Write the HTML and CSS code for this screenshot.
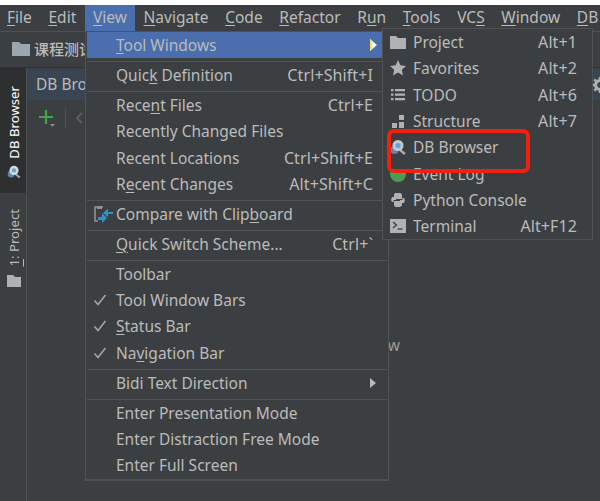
FILE: index.html
```html
<!DOCTYPE html>
<html lang="en">
<head>
<meta charset="utf-8">
<title>View menu</title>
<link rel="stylesheet" href="styles.css">
</head>
<body>
<div class="window">
  <nav class="menubar">
    <span class="mb-item"><u>F</u>ile</span>
    <span class="mb-item"><u>E</u>dit</span>
    <span class="mb-item active"><u>V</u>iew</span>
    <span class="mb-item"><u>N</u>avigate</span>
    <span class="mb-item"><u>C</u>ode</span>
    <span class="mb-item"><u>R</u>efactor</span>
    <span class="mb-item">R<u>u</u>n</span>
    <span class="mb-item"><u>T</u>ools</span>
    <span class="mb-item">VC<u>S</u></span>
    <span class="mb-item"><u>W</u>indow</span>
    <span class="mb-item"><u>D</u>B</span>
  </nav>
  <div class="navbar">
    <svg class="nav-folder" width="18" height="14" viewBox="0 0 18 14"><path d="M0 0h7l2 2h9v12H0z" fill="#9aa7b0"/></svg>
    <span class="crumb">课程测试</span>
  </div>
  <div class="workspace">
    <aside class="sidebar">
      <div class="side-tab current">
        <span class="side-label">DB Browser</span>
        <svg width="16" height="16" viewBox="0 0 16 16"><circle cx="4.500" cy="11" r="4" fill="#5f86b3"/><path d="M10 11l5 4" stroke="#a9a9a9" stroke-width="2.400"/><circle cx="8" cy="6.500" r="5.500" fill="#d5d9dc"/><circle cx="8" cy="6.500" r="2.600" fill="#58a9d8"/></svg>
      </div>
      <div class="side-tab">
        <span class="side-label"><u>1</u>: Project</span>
        <svg width="14" height="12" viewBox="0 0 14 12"><path d="M0 0h6l2 2h6v10H0z" fill="#afb1b3"/></svg>
      </div>
    </aside>
    <main class="content">
      <div class="tabs">
        <span class="tab">DB Browser</span>
        <span class="tab-end">
          <svg width="16" height="16" viewBox="0 0 16 16"><circle cx="8" cy="8" r="4.500" fill="none" stroke="#afb1b3" stroke-width="3"/><path d="M8 0v3M8 13v3M0 8h3M13 8h3M2.300 2.300l2 2M11.700 11.700l2 2M13.700 2.300l-2 2M4.300 11.700l-2 2" stroke="#afb1b3" stroke-width="2.400"/></svg>
        </span>
      </div>
      <div class="toolbar">
        <svg width="18" height="18" viewBox="0 0 18 18"><path d="M8 1v14M1 8h14" stroke="#3fa64a" stroke-width="2.200"/><path d="M12 15h5l-2.500 3z" fill="#8a8d8f"/></svg>
        <span class="tool-sep"></span>
        <svg width="8" height="12" viewBox="0 0 8 12"><path d="M7 1L2 6l5 5" fill="none" stroke="#5a5d5f" stroke-width="2"/></svg>
      </div>
      <p class="hint">Nothing to show</p>
    </main>
  </div>

  <div class="menu view-menu">
    <div class="row selected"><span class="label"><u>T</u>ool Windows</span><svg class="hot-arrow" width="7" height="12" viewBox="0 0 7 12"><path d="M0 0l7 6-7 6z" fill="#ffffff"/><path d="M0 0l2 1.700v8.600L0 12z" fill="#f2e84a"/></svg></div>
    <div class="sep"></div>
    <div class="row"><span class="label">Quic<u>k</u> Definition</span><span class="key">Ctrl+Shift+I</span></div>
    <div class="sep"></div>
    <div class="row"><span class="label">Rece<u>n</u>t Files</span><span class="key">Ctrl+E</span></div>
    <div class="row"><span class="label">Recently Changed Files</span></div>
    <div class="row"><span class="label">Recent Locations</span><span class="key">Ctrl+Shift+E</span></div>
    <div class="row"><span class="label">R<u>e</u>cent Changes</span><span class="key">Alt+Shift+C</span></div>
    <div class="sep"></div>
    <div class="row">
      <svg class="gutter" width="20" height="20" viewBox="0 0 20 20"><path d="M10 3H2v14h3" fill="none" stroke="#8f9193" stroke-width="1.600"/><path d="M4 2h5v3H4z" fill="#8f9193"/><path d="M20 8h-5V4.500L10 9l5 4V10h5zM5 13h4V9l5 5-5 5v-3H5z" fill="#3592c4"/></svg>
      <span class="label">Compare with Clip<u>b</u>oard</span>
    </div>
    <div class="sep"></div>
    <div class="row"><span class="label"><u>Q</u>uick Switch Scheme...</span><span class="key">Ctrl+`</span></div>
    <div class="sep"></div>
    <div class="row"><span class="label">Toolbar</span></div>
    <div class="row"><svg class="gutter" width="14" height="12" viewBox="0 0 14 12"><path d="M1.500 6.500l3.500 4L12.500 1" fill="none" stroke="#a5a7a9" stroke-width="1.500"/></svg><span class="label">Tool Window Bars</span></div>
    <div class="row"><svg class="gutter" width="14" height="12" viewBox="0 0 14 12"><path d="M1.500 6.500l3.500 4L12.500 1" fill="none" stroke="#a5a7a9" stroke-width="1.500"/></svg><span class="label"><u>S</u>tatus Bar</span></div>
    <div class="row"><svg class="gutter" width="14" height="12" viewBox="0 0 14 12"><path d="M1.500 6.500l3.500 4L12.500 1" fill="none" stroke="#a5a7a9" stroke-width="1.500"/></svg><span class="label">Na<u>v</u>igation Bar</span></div>
    <div class="sep"></div>
    <div class="row"><span class="label">Bidi Text Direction</span><span class="arrow"></span></div>
    <div class="sep"></div>
    <div class="row"><span class="label">Enter Presentation Mode</span></div>
    <div class="row"><span class="label">Enter Distraction Free Mode</span></div>
    <div class="row"><span class="label">Enter Full Screen</span></div>
  </div>

  <div class="menu sub-menu">
    <div class="sub-row"><svg class="sub-icon" width="16" height="13" viewBox="0 0 16 13"><path d="M0 0h6l2 2h8v11H0z" fill="#afb1b3"/></svg><span class="label">Project</span><span class="key">Alt+1</span></div>
    <div class="sub-row"><svg class="sub-icon" width="16" height="16" viewBox="0 0 16 16"><path d="M8 0l2.400 5.300 5.600.6-4.200 3.800 1.200 5.800L8 12.600l-5 2.900 1.200-5.800L0 5.900l5.600-.6z" fill="#afb1b3"/></svg><span class="label">Favorites</span><span class="key">Alt+2</span></div>
    <div class="sub-row"><svg class="sub-icon" width="16" height="12" viewBox="0 0 16 12"><path d="M1 0h2.500v2.200H1zM5 0h10v2.200H5zM1 4.500h2.500v2.200H1zM5 4.500h10v2.200H5zM1 9h2.500v2.200H1zM5 9h10v2.200H5z" fill="#afb1b3"/></svg><span class="label">TODO</span><span class="key">Alt+6</span></div>
    <div class="sub-row"><svg class="sub-icon" width="16" height="13" viewBox="0 0 16 13"><path d="M9 0h5v5H9zM2 8h5v5H2zM9 7h5v6H9z" fill="#afb1b3"/></svg><span class="label">Structure</span><span class="key">Alt+7</span></div>
    <div class="sub-row"><svg class="sub-icon" width="16" height="16" viewBox="0 0 16 16"><circle cx="4.500" cy="11" r="4" fill="#5f86b3"/><path d="M10 11l5 4" stroke="#a9a9a9" stroke-width="2.400"/><circle cx="8" cy="6.500" r="5.500" fill="#c5c9cc"/><circle cx="8" cy="6.500" r="2.600" fill="#58a9d8"/></svg><span class="label">DB Browser</span></div>
    <div class="sub-row"><svg class="sub-icon" width="16" height="16" viewBox="0 0 16 16"><path d="M0 6h16v2a8 8 0 0 1-16 0z" fill="#499c54"/></svg><span class="label">Event Log</span></div>
    <div class="sub-row"><svg class="sub-icon" width="16" height="16" viewBox="0 0 16 16"><path d="M5 1h5.500L12 2.500V7H6v1h6.500V6h1.500l1 2-1 3h-2v2.500L10 15H5.500L4 13.500V9h6V8H3.500v2H2L1 8l1-3h2V2.500z" fill="#afb1b3"/></svg><span class="label">Python Console</span></div>
    <div class="sub-row"><svg class="sub-icon" width="16" height="14" viewBox="0 0 16 14"><path d="M0 0h16v14H0z" fill="#afb1b3"/><path d="M3 3l3.500 3L3 9" fill="none" stroke="#3c3f41" stroke-width="1.300"/><path d="M7.500 10h5" stroke="#3c3f41" stroke-width="1.300"/></svg><span class="label">Terminal</span><span class="key">Alt+F12</span></div>
  </div>

  <div class="callout"></div>
</div>
</body>
</html>
```

FILE: styles.css
```css
* { box-sizing: border-box; }
html, body { margin: 0; padding: 0; }
body {
  width: 600px;
  height: 501px;
  overflow: hidden;
  background: #fff;
  font-family: "Noto Sans", "Noto Sans CJK SC", sans-serif;
  font-size: 15.500px;
  color: #bbbbbb;
}
u { text-underline-offset: 2px; text-decoration-thickness: 1px; }
.window {
  position: relative;
  margin-top: 5px;
  height: 496px;
  background: #3c3f41;
  display: flex;
  flex-direction: column;
}
.menubar {
  height: 27px;
  flex: none;
  display: flex;
  border-bottom: 1px solid #515151;
  line-height: 25px;
  white-space: nowrap;
  overflow: hidden;
}
.mb-item { padding: 0 8.350px; }
.mb-item:first-child { padding-left: 7px; }
.mb-item.active { background: #4b6eaf; }
.navbar {
  height: 36px;
  flex: none;
  display: flex;
  align-items: center;
  gap: 4px;
  padding: 0 0 2px 12px;
  border-bottom: 1px solid #323232;
  color: #bbbbbb;
  font-weight: 500;
}
.crumb { font-family: "Noto Sans CJK SC", sans-serif; font-size: 15px; white-space: nowrap; }
.workspace { flex: 1; display: flex; min-height: 0; }
.sidebar {
  width: 27px;
  flex: none;
  border-right: 1px solid #505254;
  display: flex;
  flex-direction: column;
}
.side-tab {
  display: flex;
  flex-direction: column;
  align-items: center;
  gap: 6px;
  padding: 18px 0 15px 1px;
}
.side-tab.current { background: #2d2f30; color: #ffffff; height: 125px; }
.side-label {
  writing-mode: vertical-rl;
  transform: rotate(180deg);
  font-size: 13.200px;
  line-height: 18px;
  white-space: nowrap;
}
.side-tab + .side-tab { gap: 8px; padding-top: 16px; }
.content { flex: 1; min-width: 0; }
.tabs {
  height: 31px;
  margin-top: 1px;
  display: flex;
  justify-content: space-between;
  background: #3a4553;
}
.tab { padding: 0 9px; line-height: 30px; }
.tab-end { padding: 7px 0 0; margin-right: -8px; }
.toolbar {
  height: 36px;
  display: flex;
  align-items: center;
  gap: 9px;
  padding-left: 11px;
}
.tool-sep { width: 1px; height: 20px; background: #4e5052; }
.hint { margin: 198px 0 0; padding-right: 200px; text-align: right; font-size: 15.500px; color: #9a9c9e; }
.menu {
  position: absolute;
  background: #3c3f41;
}
.view-menu {
  left: 85px;
  top: 26px;
  width: 304px;
  padding: 0 1px 1px;
  border: 1px solid #515151;
  border-bottom-width: 2px;
}
.row {
  position: relative;
  height: 26.250px;
  display: flex;
  align-items: center;
  justify-content: space-between;
  padding: 0 14px 0 29px;
  white-space: nowrap;
}
.row.selected { background: #4b6eaf; }
.gutter { position: absolute; left: 6px; top: 50%; transform: translateY(-50%); }
.sep { height: 3.750px; border-bottom: 1px solid #505254; }
.key { font-size: 16px; letter-spacing: 0.100px; }
.arrow {
  width: 0;
  height: 0;
  margin-right: -3px;
  border-left: 6px solid #bbbbbb;
  border-top: 5px solid transparent;
  border-bottom: 5px solid transparent;
}
.hot-arrow { margin-right: -4px; }
.sub-menu {
  left: 382px;
  top: 23px;
  width: 211px;
  height: 212px;
  border: 1px solid #515151;
}
.sub-row {
  height: 26.300px;
  display: flex;
  align-items: center;
  padding: 0 15px 0 7px;
  white-space: nowrap;
}
.sub-icon { flex: none; margin-right: 7px; }
.sub-row .label { flex: 1; }
.callout {
  position: absolute;
  left: 387px;
  top: 124px;
  width: 143px;
  height: 44px;
  border: 4px solid #f4200f;
  border-radius: 7px;
}
```
